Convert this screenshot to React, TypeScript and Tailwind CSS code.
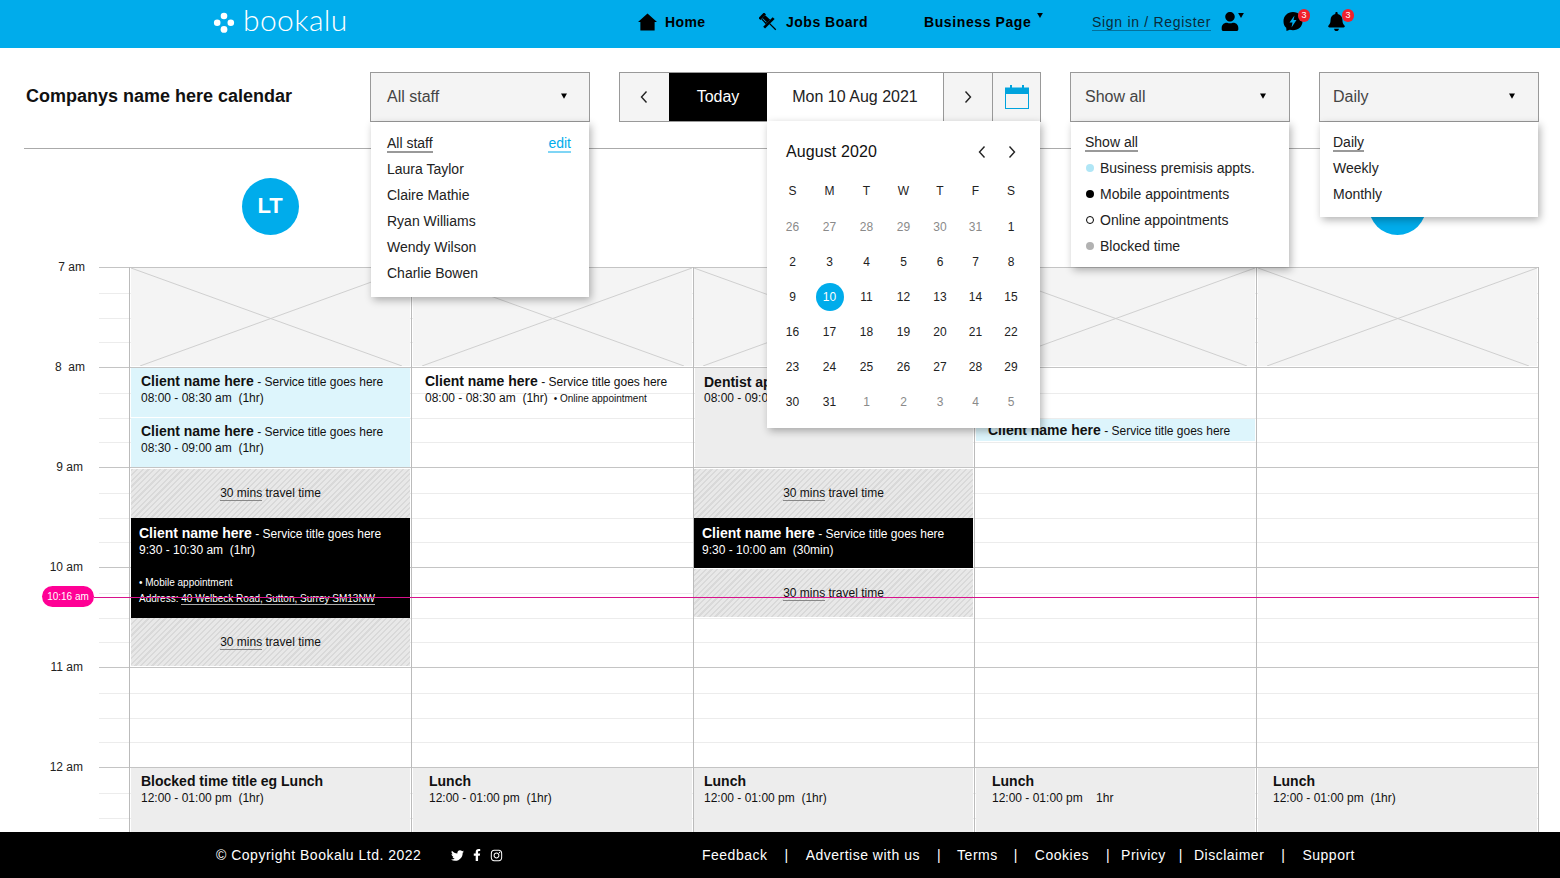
import React from 'react';
import { FaUser, FaBell, FaTwitter, FaFacebookF, FaInstagram } from 'react-icons/fa';

const Caret = ({ className = '' }: { className?: string }) => (
  <svg viewBox="0 0 8 7" className={className}><polygon points="0,0 8,0 4,7" fill="#000" /></svg>
);

const Chevron = ({ dir }: { dir: 'l' | 'r' }) => (
  <svg viewBox="0 0 10 14" className="w-[10px] h-[14px]" fill="none" stroke="#222" strokeWidth="1.4">
    <path d={dir === 'l' ? 'M7.5 1.5 L2.5 7 L7.5 12.5' : 'M2.5 1.5 L7.5 7 L2.5 12.5'} />
  </svg>
);

const Badge = () => (
  <span className="absolute -top-[3px] -right-[7px] flex h-[13px] w-[12px] items-center justify-center rounded-full bg-[#f0202c] text-[9px] leading-none text-white">3</span>
);

const Dropdown = ({ label, pad, panel }: { label: string; pad: string; panel: React.ReactNode }) => (
  <div className="relative h-[50px] w-[220px] shrink-0">
    <div className={`flex h-full items-center justify-between border border-[#999] bg-[#f4f4f4] text-[16px] text-[#444] ${pad}`}>
      <span className="-mt-[1px]">{label}</span>
      <Caret className="w-[6px] h-[6px] -mt-[2px]" />
    </div>
    <div className="absolute left-[1px] top-full w-[218px] bg-white shadow-[2px_3px_8px_rgba(0,0,0,0.3)]">{panel}</div>
  </div>
);

const Selected = ({ children }: { children: React.ReactNode }) => (
  <span className="border-b-2 border-[#999] leading-[15px] inline-block">{children}</span>
);

const staff = ['Laura Taylor', 'Claire Mathie', 'Ryan Williams', 'Wendy Wilson', 'Charlie Bowen'];
const shows = [
  ['Business premisis appts.', 'bg-[#b0e6f6]'],
  ['Mobile appointments', 'bg-black'],
  ['Online appointments', 'bg-white border border-black'],
  ['Blocked time', 'bg-[#b2b2b2]'],
];
const dayHeads = ['S', 'M', 'T', 'W', 'T', 'F', 'S'];
const days: [string, boolean][] = [
  ...['26', '27', '28', '29', '30', '31'].map((d) => [d, true] as [string, boolean]),
  ...Array.from({ length: 31 }, (_, i) => [String(i + 1), false] as [string, boolean]),
  ...['1', '2', '3', '4', '5'].map((d) => [d, true] as [string, boolean]),
];

const Placeholder = () => (
  <div className="mt-[1px] h-[98px] bg-[#f4f4f4]">
    <svg viewBox="0 0 280 98" preserveAspectRatio="none" className="h-full w-full" fill="none" stroke="#cfcfcf" strokeWidth="1">
      <line x1="0" y1="0" x2="272" y2="98" />
      <line x1="9" y1="98" x2="280" y2="0" />
    </svg>
  </div>
);

const Name = ({ children, dark }: { children: React.ReactNode; dark?: boolean }) => (
  <div className={`text-[12px] leading-[16px] whitespace-nowrap ${dark ? 'text-white' : 'text-[#111]'}`}>
    <span className="text-[14px] font-bold">{children}</span> - Service title goes here
  </div>
);

const Appt = ({ pad = 'pl-[10px]', h = 'h-[49px]', bg = 'bg-[#ddf5fc]', mt = 'mt-[1px]', time, extra }: { pad?: string; h?: string; bg?: string; mt?: string; time: string; extra?: React.ReactNode }) => (
  <div className={`${mt} ${h} ${bg} ${pad} pt-[5px] shrink-0`}>
    <Name>Client name here</Name>
    <div className="text-[12px] leading-[16px] text-[#111] whitespace-pre">{time}{extra}</div>
  </div>
);

const Travel = ({ h = 'h-[49px]', mt = 'mt-[1px]', up = '' }: { h?: string; mt?: string; up?: string }) => (
  <div className={`${mt} ${h} ${up} shrink-0 flex items-center justify-center text-[12px] text-[#111] bg-[repeating-linear-gradient(135deg,#d9d9d9_0,#d9d9d9_1.5px,#e8e8e8_1.5px,#e8e8e8_4px)]`}>
    <span><span className="border-b border-[#888]">30 mins</span> travel time</span>
  </div>
);

const Lunch = ({ title, time, pad, mt }: { title: string; time: string; pad: string; mt: string }) => (
  <div className={`${mt} h-[99px] shrink-0 bg-[#ededed] ${pad} pt-[5px]`}>
    <div className="text-[14px] leading-[17px] font-bold text-[#111]">{title}</div>
    <div className="text-[12px] leading-[16px] text-[#111] whitespace-pre">{time}</div>
  </div>
);

const hours: [string, string][] = [['7 am', 'pr-[44px]'], ['8  am', 'pr-[44px]'], ['9 am', 'pr-[46px]'], ['10 am', 'pr-[46px]'], ['11 am', 'pr-[46px]'], ['12 am', 'pr-[46px]']];

const footerLinks: [string, string, string][] = [
  ['Feedback', '', ''],
  ['Advertise with us', 'ml-[17px]', 'ml-[17px]'],
  ['Terms', 'ml-[17px]', 'ml-[16px]'],
  ['Cookies', 'ml-[16px]', 'ml-[17px]'],
  ['Privicy', 'ml-[17px]', 'ml-[11px]'],
  ['Disclaimer', 'ml-[13px]', 'ml-[11px]'],
  ['Support', 'ml-[17px]', 'ml-[17px]'],
];

export default function App() {
  return (
    <div className="flex h-[878px] w-[1560px] flex-col overflow-hidden bg-white font-['Liberation_Sans',Arial,sans-serif] text-[#111]">
      {/* Top navigation */}
      <header className="flex h-12 shrink-0 items-center bg-[#00aceb] pb-[4px] text-black">
        <div className="flex w-[638px] items-center pl-[213px] shrink-0">
          <svg viewBox="0 0 22 22" className="h-[22px] w-[22px]" fill="#fff">
            <circle cx="11" cy="5" r="3.3" />
            <circle cx="4.2" cy="11.7" r="3.3" />
            <circle cx="17.8" cy="11.7" r="3.3" />
            <circle cx="11" cy="18.4" r="3.4" />
          </svg>
          <span className="ml-[8px] font-['Lato',sans-serif] text-[30px] font-light leading-none tracking-[0.4px] text-white -mt-[6px]">bookalu</span>
        </div>
        <svg viewBox="0 0 20 18" className="h-[18px] w-[19px] shrink-0" fill="#000"><path d="M10 0 L20 9 L17.5 9 L17.5 18 L2.5 18 L2.5 9 L0 9 Z" /></svg>
        <span className="ml-[8px] w-[40px] whitespace-nowrap text-[14px] font-bold tracking-[0.4px]">Home</span>
        <svg viewBox="0 0 24 24" className="ml-[54px] h-[19px] w-[19px] shrink-0" fill="#000">
          <g transform="rotate(-45 12 12)">
            <rect x="7" y="-1" width="10" height="3.5" />
            <path d="M8.5 2.5 H15.5 L16 11 H8 Z" />
            <rect x="3.5" y="11" width="17" height="3.4" />
            <rect x="11.2" y="14" width="1.6" height="11" />
            <rect x="9.8" y="3" width="1" height="7" fill="#00aceb" />
          </g>
        </svg>
        <span className="ml-[8px] w-[83px] whitespace-nowrap text-[14px] font-bold tracking-[0.5px]">Jobs Board</span>
        <span className="ml-[55px] w-[107px] whitespace-nowrap text-[14px] font-bold tracking-[0.6px]">Business Page</span>
        <Caret className="ml-[6px] w-[6px] h-[5px] -mt-[14px]" />
        <span className="ml-[49px] w-[119px] whitespace-nowrap border-b border-[#04719b] text-[14px] leading-[16px] tracking-[0.7px] text-[#0a2b3a]">Sign in / Register</span>
        <FaUser className="ml-[9px] h-[19px] w-[20px] -mt-[2px]" />
        <Caret className="-ml-[2px] w-[6px] h-[5px] -mt-[14px]" />
        <span className="relative ml-[39px] -mt-[2px] block h-[19px] w-[20px]">
          <svg viewBox="0 0 20 19" className="h-full w-full">
            <path d="M10 0 C15.5 0 19.5 4 19.5 9.2 C19.5 14.4 15.5 18.2 10 18.2 C8.8 18.2 7.8 18 6.8 17.7 L3.5 19 L3.2 15.8 C1.3 14.2 0.5 12 0.5 9.2 C0.5 4 4.5 0 10 0 Z" fill="#000" />
            <path d="M11.5 3.5 L6.5 10.5 L9.5 10.5 L8.5 15.5 L13.5 8 L10.5 8 Z" fill="#00aceb" />
          </svg>
          <Badge />
        </span>
        <span className="relative ml-[24px] -mt-[2px] block h-[19px] w-[20px]">
          <FaBell className="h-[19px] w-[19px]" />
          <Badge />
        </span>
      </header>

      {/* Toolbar */}
      <div className="relative z-20 mx-[24px] h-[101px] shrink-0 border-b border-[#aaa] pt-[24px] flex">
        <h1 className="w-[346px] shrink-0 pl-[2px] text-[18px] font-bold leading-[48px] text-[#111]">Companys name here calendar</h1>
        <Dropdown
          label="All staff"
          pad="pl-[16px] pr-[22px]"
          panel={
            <div className="pl-[16px] pr-[18px] pb-[11px] pt-[8px] text-[14px] leading-[26px] text-[#222]">
              <div className="flex h-[26px] items-center justify-between pt-[2px]">
                <Selected>All staff</Selected>
                <span className="inline-block border-b-2 border-[#7fd5f5] leading-[15px] text-[#00aceb]">edit</span>
              </div>
              {staff.map((s) => <div key={s}>{s}</div>)}
            </div>
          }
        />
        {/* Date navigator */}
        <div className="relative ml-[29px] flex h-[50px] w-[422px] shrink-0 border border-[#999] text-[16px]">
          <div className="flex w-[49px] items-center justify-center bg-[#f4f4f4] pr-[2px]"><Chevron dir="l" /></div>
          <div className="flex w-[98px] items-center justify-center bg-black text-white">Today</div>
          <div className="flex w-[176px] items-center justify-center bg-white text-[#222]">Mon 10 Aug 2021</div>
          <div className="flex w-[49px] items-center justify-center border-l border-[#999] bg-[#f4f4f4]"><Chevron dir="r" /></div>
          <div className="flex w-[48px] items-center justify-center border-l border-[#999] bg-[#f4f4f4]">
            <svg viewBox="0 0 24 24" className="h-[24px] w-[24px]" fill="none">
              <rect x="0.5" y="3" width="23" height="20.5" stroke="#00a3dd" />
              <rect x="0" y="3" width="24" height="6" fill="#00a3dd" />
              <rect x="5" y="0" width="2" height="4" fill="#00a3dd" />
              <rect x="17" y="0" width="2" height="4" fill="#00a3dd" />
            </svg>
          </div>
          <div className="absolute left-[147px] top-full h-[307px] w-[273px] bg-white pl-[7px] pt-[20px] shadow-[2px_3px_8px_rgba(0,0,0,0.3)]">
            <div className="flex items-center pl-[12px] pr-[23px]">
              <span className="text-[16px] leading-[22px] text-[#111] tracking-[0.1px]">August 2020</span>
              <span className="ml-auto flex gap-[20px]"><Chevron dir="l" /><Chevron dir="r" /></span>
            </div>
            <div className="mt-[10px] grid grid-cols-[37px_37px_37px_37px_36px_35px_36px] text-center text-[12px] text-[#222]">
              {dayHeads.map((d, i) => <div key={i} className="flex h-[36px] items-center justify-center">{d}</div>)}
              {days.map(([d, muted], i) => (
                <div key={i} className="flex h-[35px] items-center justify-center">
                  <span className={d === '10' && !muted ? 'flex h-[28px] w-[28px] items-center justify-center rounded-full bg-[#00aceb] text-white' : muted ? 'text-[#8a8a8a]' : ''}>{d}</span>
                </div>
              ))}
            </div>
          </div>
        </div>
        <div className="ml-[29px]">
          <Dropdown
            label="Show all"
            pad="pl-[14px] pr-[23px]"
            panel={
              <div className="px-[14px] pb-[8px] pt-[7px] text-[14px] leading-[26px] text-[#222]">
                <Selected>Show all</Selected>
                {shows.map(([t, c]) => (
                  <div key={t} className="flex items-center">
                    <span className={`mr-[6px] ml-[1px] h-[8px] w-[8px] rounded-full ${c}`} />
                    {t}
                  </div>
                ))}
              </div>
            }
          />
        </div>
        <div className="ml-[29px]">
          <Dropdown
            label="Daily"
            pad="pl-[13px] pr-[23px]"
            panel={
              <div className="px-[13px] pb-[10px] pt-[7px] text-[14px] leading-[26px] text-[#222]">
                <Selected>Daily</Selected>
                <div>Weekly</div>
                <div>Monthly</div>
              </div>
            }
          />
        </div>
      </div>

      {/* Staff avatars */}
      <div className="grid h-[110px] shrink-0 grid-cols-[129px_282px_282px_281px_282px_283px]">
        <div />
        {['LT', '', '', '', ''].map((a, i) => (
          <div key={i} className="flex justify-center pt-[29px]">
            <div className="flex h-[57px] w-[57px] items-center justify-center rounded-full bg-[#00aceb] pb-[2px] text-[22px] font-bold text-white">{a}</div>
          </div>
        ))}
      </div>

      {/* Calendar grid */}
      <main className="min-h-0 flex-1 overflow-hidden">
        <div className="relative mt-[8px]">
          {/* hour rules */}
          <div className="absolute left-[99px] top-0 w-[1440px]">
            {hours.map(([h]) => (
              <div key={h} className="h-[100px]">
                <div className="h-[26px] border-t border-[#c4c4c4]" />
                <div className="h-[25px] border-t border-[#ececec]" />
                <div className="h-[24px] border-t border-[#ececec]" />
                <div className="h-[25px] border-t border-[#ececec]" />
              </div>
            ))}
          </div>

          <div className="relative grid grid-cols-[129px_282px_282px_281px_282px_283px]">
            <div className="-mt-[8px] text-right text-[12px] leading-[16px] text-[#222]">
              {hours.map(([h, p]) => (
                <div key={h} className={`h-[100px] whitespace-pre ${p}`}>{h}</div>
              ))}
            </div>

            {/* Column 1 */}
            <div className="flex flex-col border-l border-[#bbb] pl-[1px] pr-[1px]">
              <Placeholder />
              <Appt mt="mt-[2px]" time="08:00 - 08:30 am  (1hr)" />
              <Appt time="08:30 - 09:00 am  (1hr)" />
              <Travel mt="mt-[2px]" up="pb-[2px]" />
              <div className="h-[100px] shrink-0 bg-black pl-[8px] pt-[7px] text-white">
                <Name dark>Client name here</Name>
                <div className="text-[12px] leading-[16px] whitespace-pre">9:30 - 10:30 am  (1hr)</div>
                <div className="mt-[17px] text-[10px] leading-[16px] font-medium">• Mobile appointment</div>
                <div className="text-[10px] leading-[16px] whitespace-nowrap">Address: <span className="border-b border-[#aaa]">40 Welbeck Road, Sutton, Surrey SM13NW</span></div>
              </div>
              <Travel mt="mt-0" h="h-[48px]" />
              <Lunch mt="mt-[102px]" pad="pl-[10px]" title="Blocked time title eg Lunch" time="12:00 - 01:00 pm  (1hr)" />
            </div>

            {/* Column 2 */}
            <div className="flex flex-col border-l border-[#bbb] pl-[1px] pr-[1px]">
              <Placeholder />
              <Appt
                mt="mt-[2px]"
                bg="bg-transparent"
                pad="pl-[12px]"
                time="08:00 - 08:30 am  (1hr)"
                extra={<span className="ml-[6px] text-[10px]">• Online appointment</span>}
              />
              <Lunch mt="mt-[351px]" pad="pl-[16px]" title="Lunch" time="12:00 - 01:00 pm  (1hr)" />
            </div>

            {/* Column 3 */}
            <div className="flex flex-col border-l border-[#bbb] pr-[1px]">
              <Placeholder />
              <div className="ml-[1px] mt-[2px] h-[99px] shrink-0 bg-[#ededed] pl-[9px] pt-[6px]">
                <div className="text-[14px] leading-[16px] font-bold">Dentist appointment</div>
                <div className="text-[12px] leading-[16px] whitespace-pre">08:00 - 09:00 am  (1hr)</div>
              </div>
              <Travel mt="mt-[2px]" up="pb-[2px]" />
              <div className="h-[50px] shrink-0 bg-black pl-[8px] pt-[7px] text-white">
                <Name dark>Client name here</Name>
                <div className="text-[12px] leading-[16px] whitespace-pre">9:30 - 10:00 am  (30min)</div>
              </div>
              <Travel h="h-[48px]" />
              <Lunch mt="mt-[151px]" pad="pl-[10px]" title="Lunch" time="12:00 - 01:00 pm  (1hr)" />
            </div>

            {/* Column 4 */}
            <div className="flex flex-col border-l border-[#bbb] pl-[1px] pr-[1px]">
              <Placeholder />
              <div className="mt-[53px] h-[22px] shrink-0 bg-[#ddf5fc] pl-[12px] pt-[3px]"><Name>Client name here</Name></div>
              <Lunch mt="mt-[327px]" pad="pl-[16px]" title="Lunch" time="12:00 - 01:00 pm    1hr" />
            </div>

            {/* Column 5 */}
            <div className="flex flex-col border-x border-[#bbb] pl-[1px] pr-[1px]">
              <Placeholder />
              <Lunch mt="mt-[402px]" pad="pl-[15px]" title="Lunch" time="12:00 - 01:00 pm  (1hr)" />
            </div>
          </div>

          {/* Current time marker */}
          <div className="absolute left-[42px] top-[319px] flex w-[1497px] items-center">
            <span className="flex h-[21px] w-[52px] shrink-0 items-center justify-center rounded-full bg-[#ff0095] text-[10px] text-white">10:16 am</span>
            <span className="mt-[2px] h-px flex-1 bg-[#d8128c]" />
          </div>
        </div>
      </main>

      {/* Footer */}
      <footer className="flex h-[46px] shrink-0 items-center bg-black pl-[216px] text-[14px] tracking-[0.5px] text-white">
        <span className="w-[235px] shrink-0">© Copyright Bookalu Ltd. 2022</span>
        <FaTwitter className="h-[13px] w-[13px]" />
        <FaFacebookF className="ml-[9px] h-[12px] w-[8px]" />
        <FaInstagram className="ml-[9px] h-[13px] w-[13px]" />
        <div className="ml-[199px] flex items-center">
          {footerLinks.map(([l, sepGap, gap], i) => (
            <React.Fragment key={l}>
              {i > 0 && <span className={sepGap}>|</span>}
              <span className={gap}>{l}</span>
            </React.Fragment>
          ))}
        </div>
      </footer>
    </div>
  );
}
